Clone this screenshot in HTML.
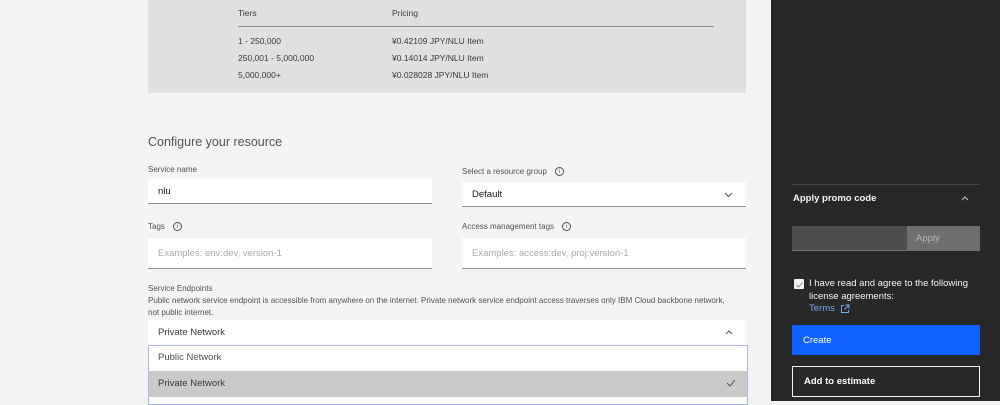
<!DOCTYPE html>
<html><head><meta charset="utf-8"><style>
*{margin:0;padding:0;box-sizing:border-box}
body{width:1000px;height:401px;overflow:hidden;background:#f4f4f4;font-family:"Liberation Sans",sans-serif;position:relative;color:#161616}
.a{position:absolute;white-space:nowrap}
.s{font-size:8.5px;color:#393939}
.lbl{font-size:8px;color:#525252}
.inp{position:absolute;background:#fff;border-bottom:1px solid #8d8d8d;font-size:9.5px;padding-left:10px;display:flex;align-items:center}
.ph{color:#a8a8a8}
.i{display:inline-block;width:9px;height:9px;border:1px solid #525252;border-radius:50%;font-size:6px;text-align:center;line-height:8px;margin-left:6px;vertical-align:middle}
svg{position:absolute}
</style></head><body>
<div class="a" style="left:148px;top:0;width:598px;height:93px;background:#e0e0e0"></div>
<div class="a s" style="left:238px;top:8px">Tiers</div>
<div class="a s" style="left:392px;top:8px">Pricing</div>
<div class="a" style="left:238px;top:26px;width:476px;height:1px;background:#8d8d8d"></div>
<div class="a s" style="left:238px;top:36px">1 - 250,000</div>
<div class="a s" style="left:392px;top:36px">¥0.42109 JPY/NLU Item</div>
<div class="a s" style="left:238px;top:53px">250,001 - 5,000,000</div>
<div class="a s" style="left:392px;top:53px">¥0.14014 JPY/NLU Item</div>
<div class="a s" style="left:238px;top:70px">5,000,000+</div>
<div class="a s" style="left:392px;top:70px">¥0.028028 JPY/NLU Item</div>

<div class="a" style="left:148px;top:135px;font-size:12.5px;color:#525252">Configure your resource</div>
<div class="a lbl" style="left:148px;top:165px">Service name</div>
<div class="inp" style="left:148px;top:179px;width:284px;height:25px">nlu</div>
<div class="a lbl" style="left:462px;top:167px">Select a resource group <span class="i">i</span></div>
<div class="inp" style="left:462px;top:182px;width:284px;height:25px">Default</div>
<svg style="left:724px;top:192px" width="9" height="6"><path d="M1 1 L4.5 4.5 L8 1" stroke="#525252" fill="none" stroke-width="1"/></svg>
<div class="a lbl" style="left:148px;top:222px">Tags <span class="i">i</span></div>
<div class="inp" style="left:148px;top:238px;width:284px;height:31px"><span class="ph">Examples: env:dev, version-1</span></div>
<div class="a lbl" style="left:462px;top:222px">Access management tags <span class="i">i</span></div>
<div class="inp" style="left:462px;top:238px;width:284px;height:31px"><span class="ph">Examples: access:dev, proj:version-1</span></div>

<div class="a lbl" style="left:148px;top:284px">Service Endpoints</div>
<div class="a lbl" style="left:148px;top:295px;line-height:11.5px">Public network service endpoint is accessible from anywhere on the internet. Private network service endpoint access traverses only IBM Cloud backbone network,<br>not public internet.</div>
<div class="inp" style="left:148px;top:320px;width:598px;height:25px;border:none;color:#393939">Private Network</div>
<svg style="left:725px;top:330px" width="8" height="5"><path d="M1 4 L4 1 L7 4" stroke="#525252" fill="none" stroke-width="1"/></svg>
<div class="a" style="left:148px;top:345px;width:600px;height:60px;background:#fff;border:1px solid #a6b8f0"></div>
<div class="a" style="left:158px;top:352px;font-size:9.5px;color:#525252">Public Network</div>
<div class="a" style="left:149px;top:371px;width:598px;height:26px;background:#cacaca"></div>
<div class="a" style="left:158px;top:378px;font-size:9.5px;color:#393939">Private Network</div>
<svg style="left:726px;top:379px" width="10" height="8"><path d="M1 4 L4 7 L9 1" stroke="#525252" fill="none" stroke-width="1"/></svg>

<div class="a" style="left:771px;top:0;width:229px;height:401px;background:#282828"></div>
<div class="a" style="left:792px;top:184px;width:188px;height:1px;background:#474747"></div>
<div class="a" style="left:793px;top:193px;font-size:9.5px;color:#f4f4f4;font-weight:bold">Apply promo code</div>
<svg style="left:961px;top:196px" width="8" height="5"><path d="M1 4 L4 1 L7 4" stroke="#c6c6c6" fill="none" stroke-width="1"/></svg>
<div class="a" style="left:792px;top:226px;width:115px;height:25px;background:#4c4c4c;border-bottom:1px solid #6f6f6f"></div>
<div class="a" style="left:907px;top:226px;width:73px;height:25px;background:#6f6f6f;color:#b8b8b8;font-size:9.5px;padding:7px 0 0 9px">Apply</div>
<div class="a" style="left:794px;top:279px;width:10px;height:10px;background:#f4f4f4;border-radius:1px"></div>
<svg style="left:796px;top:282px" width="7" height="6"><path d="M0.5 3 L2.5 5 L6.5 0.5" stroke="#8d8d8d" fill="none" stroke-width="1"/></svg>
<div class="a" style="left:809px;top:278px;font-size:9.5px;color:#f4f4f4;line-height:12.5px">I have read and agree to the following<br>license agreements:</div>
<div class="a" style="left:809px;top:303px;font-size:9.5px;color:#78a9ff">Terms</div>
<svg style="left:840px;top:304px" width="10" height="10"><path d="M4 1.5 H1.5 V8.5 H8.5 V6 M5.5 1 H9 V4.5 M9 1 L4.5 5.5" stroke="#78a9ff" fill="none" stroke-width="1"/></svg>
<div class="a" style="left:792px;top:325px;width:188px;height:30px;background:#0f62fe;color:#fff;font-size:9.5px;padding:10px 0 0 11px">Create</div>
<div class="a" style="left:792px;top:366px;width:188px;height:31px;border:1px solid #f4f4f4;color:#fff;font-size:9.5px;padding:9px 0 0 11px;font-weight:bold">Add to estimate</div>
</body></html>
